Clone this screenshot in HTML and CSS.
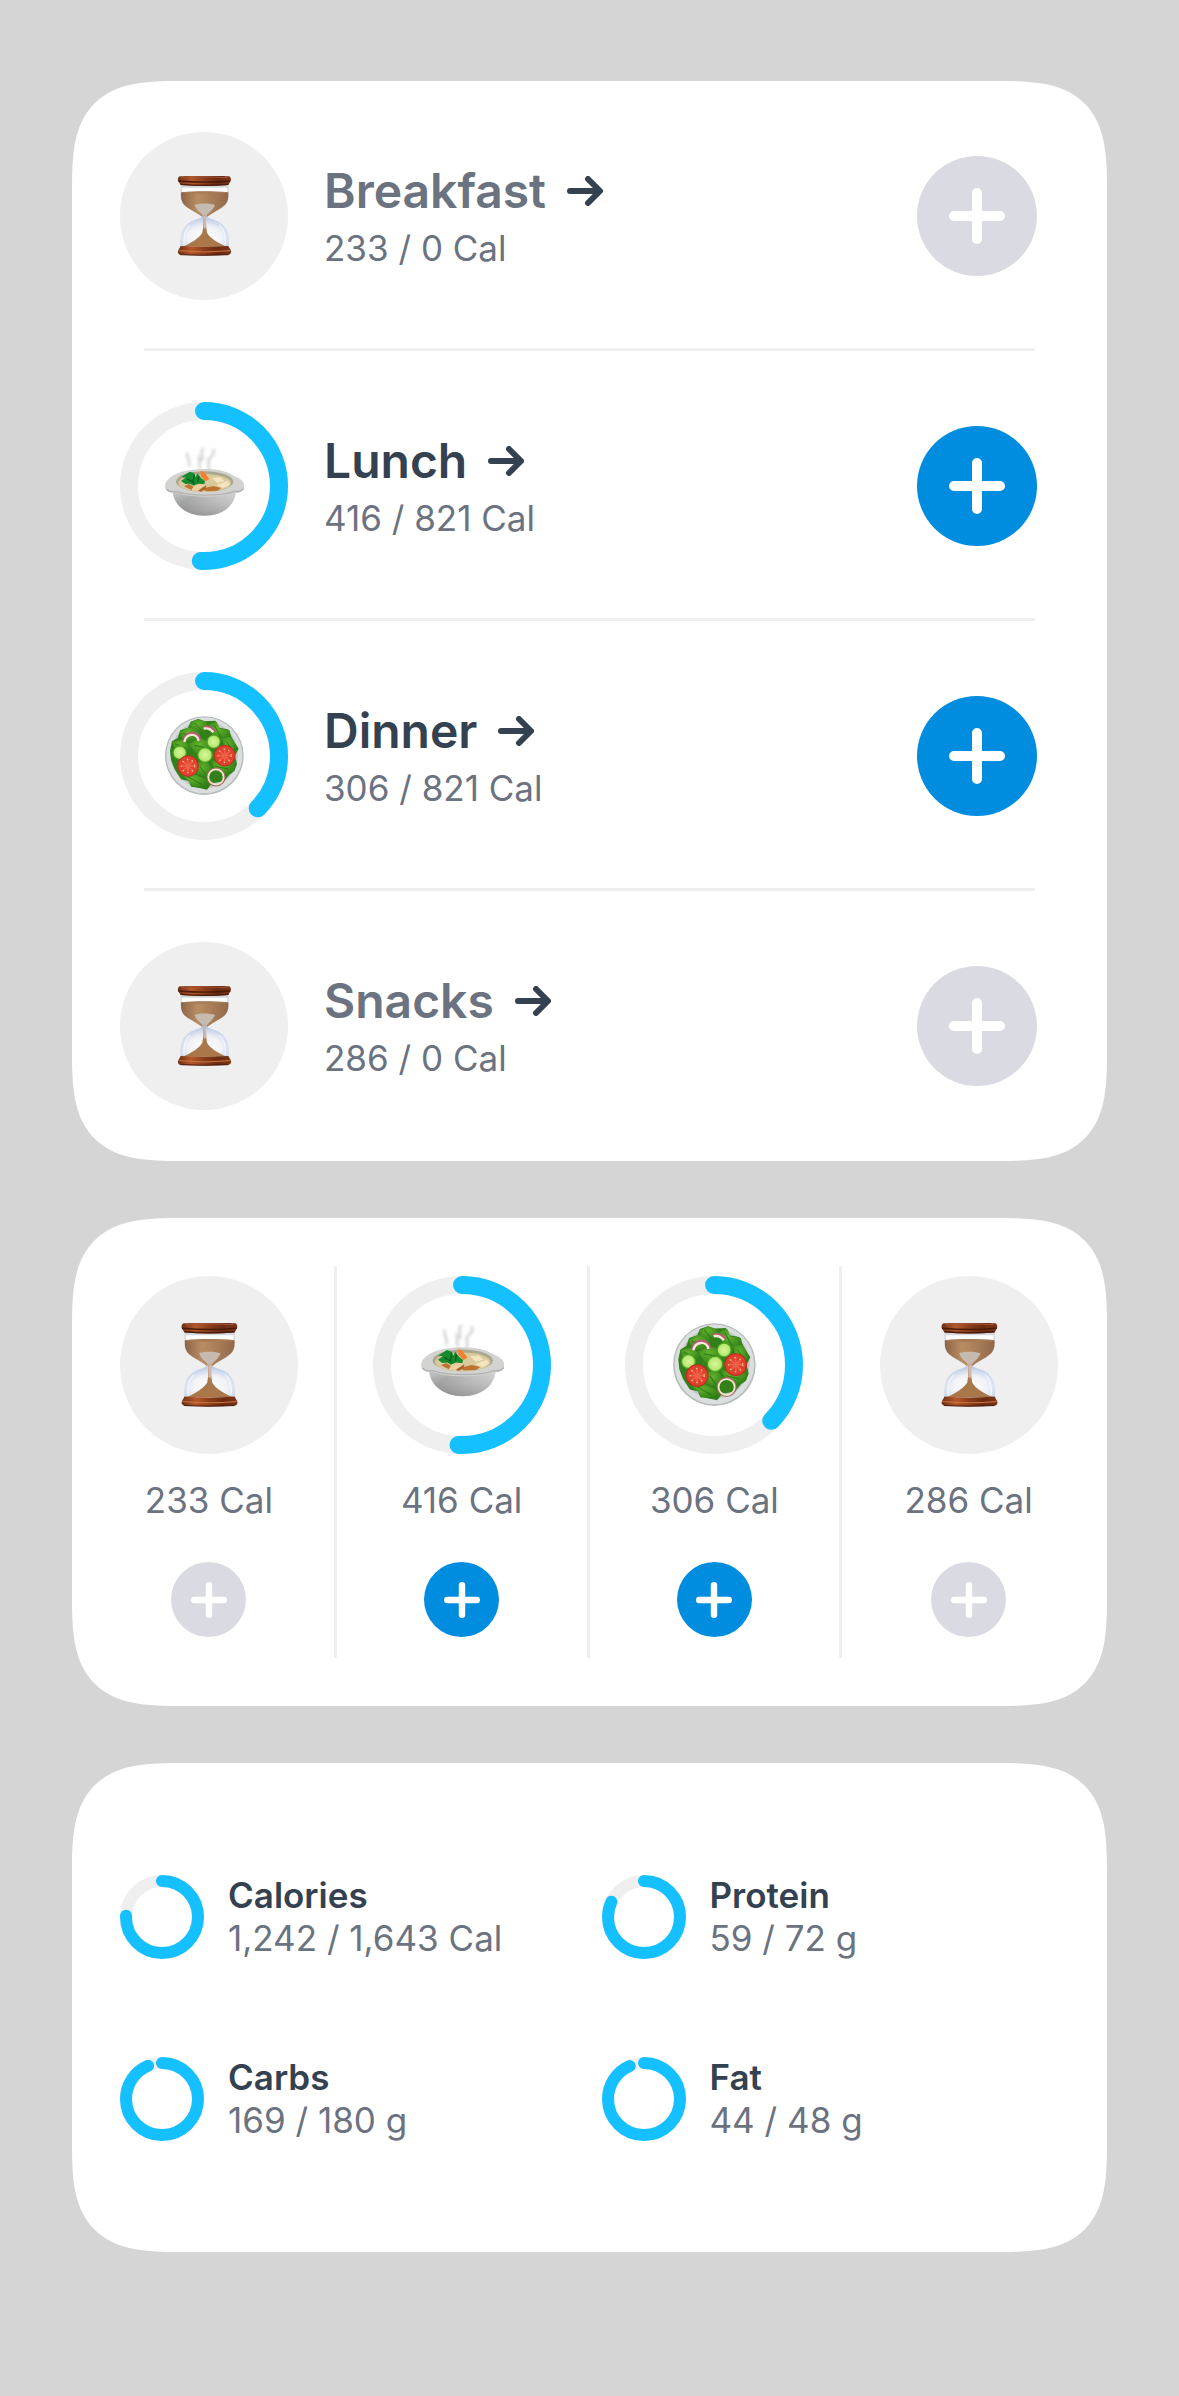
FILE: index.html
```html
<!DOCTYPE html>
<html lang="en">
<head>
<meta charset="utf-8">
<meta name="viewport" content="width=device-width, initial-scale=1">
<title>Meals and nutrition</title>
<link rel="stylesheet" href="styles.css">
</head>
<body>
<svg class="sprite" aria-hidden="true">
  <defs>
    <linearGradient id="wood" x1="0" x2="1" y1="0" y2="0">
      <stop offset="0" stop-color="#6b2f14"/><stop offset=".25" stop-color="#b4582b"/><stop offset=".5" stop-color="#8a3d1b"/><stop offset=".75" stop-color="#6a2a10"/><stop offset="1" stop-color="#7c3518"/>
    </linearGradient>
    <linearGradient id="sand" x1="0" x2="1" y1="0" y2="0">
      <stop offset="0" stop-color="#8d6547"/><stop offset=".35" stop-color="#b98d64"/><stop offset="1" stop-color="#94694a"/>
    </linearGradient>
    <radialGradient id="glass" cx=".5" cy=".7" r=".65">
      <stop offset="0" stop-color="#ffffff"/><stop offset=".55" stop-color="#f0f2f6"/><stop offset="1" stop-color="#b4c6e4"/>
    </radialGradient>
    <linearGradient id="bowl" x1="0" x2="1" y1="0" y2=".5">
      <stop offset="0" stop-color="#b9bab9"/><stop offset=".35" stop-color="#9d9f9e"/><stop offset=".7" stop-color="#bfc0bf"/><stop offset="1" stop-color="#d2d3d2"/>
    </linearGradient>
    <linearGradient id="bowl-shade" x1="0" x2="0" y1="0" y2="1">
      <stop offset="0" stop-color="#fff" stop-opacity=".25"/><stop offset="1" stop-color="#555" stop-opacity=".4"/>
    </linearGradient>
    <radialGradient id="leaf" cx=".4" cy=".35" r=".7">
      <stop offset="0" stop-color="#62b22c"/><stop offset="1" stop-color="#2f7d14"/>
    </radialGradient>
    <radialGradient id="cucumber">
      <stop offset="0" stop-color="#d9f59b"/><stop offset=".75" stop-color="#b9ea74"/><stop offset="1" stop-color="#7fc83e"/>
    </radialGradient>
    <filter id="haze" x="-20%" y="-20%" width="140%" height="140%"><feGaussianBlur stdDeviation="4"/></filter>
  </defs>

  <symbol id="hourglass" viewBox="0 0 240 240">
    <path d="M50 28H194C194 48 195 62 191 76C184 96 160 100 128 124H115C84 100 60 96 53 76C49 62 50 48 50 28Z" fill="#d3d8dd"/>
    <path d="M54 35H190V48H54Z" fill="#fff"/>
    <path d="M51 49C90 47 154 47 193 49C193 60 194 66 190 76C183 95 158 101 128 124H116C86 101 60 95 54 76C50 66 51 60 51 49Z" fill="url(#sand)"/>
    <path d="M52 49C90 45 152 45 192 49C170 55 80 55 52 49Z" fill="#a67b56"/>
    <path d="M92 86C112 81 138 81 153 87C148 101 134 110 127 119H117C110 109 95 101 92 86Z" fill="#c6bbb0"/>
    <path d="M116 118H127C129 127 140 128 158 134C186 146 198 172 194 212H50C46 172 58 146 86 134C104 128 114 127 116 118Z" fill="url(#glass)"/>
    <path d="M118 118H126C126 140 126 155 129 170C139 188 164 201 187 212H57C81 201 106 186 115 170C118 155 118 140 118 118Z" fill="#a9774a"/>
    <path d="M118 118H126V152C124 160 120 160 118 152Z" fill="#d4b7a6"/>
    <path d="M60 206C60 178 62 160 78 148M184 206C184 178 182 160 166 148" fill="none" stroke="#fff" stroke-width="4" opacity=".6"/>
    <path d="M47 1Q122-4 196 1Q203 7 200 14L193 27Q122 33 50 27L42 14Q40 5 47 1Z" fill="url(#wood)"/>
    <path d="M43 15Q122 22 199 15M50 25Q122 31 193 25" fill="none" stroke="#491b0a" stroke-width="4"/>
    <path d="M53 5Q122 0 190 5" fill="none" stroke="#9f5434" stroke-width="3"/>
    <path d="M50 210Q122 215 193 210L201 224Q203 232 195 236Q122 240 47 236Q39 231 43 223Z" fill="url(#wood)"/>
    <path d="M44 224Q122 232 199 224" fill="none" stroke="#d07540" stroke-width="3"/>
    <path d="M49 236Q122 240 193 236" fill="none" stroke="#45180a" stroke-width="3"/>
  </symbol>

  <symbol id="soup" viewBox="0 0 240 240">
    <g fill="none" stroke="#d0d0d2" stroke-width="7" stroke-linecap="round" filter="url(#haze)">
      <path d="M70 22C66 34 80 42 76 60M104 32C112 38 102 50 108 66M117 8C104 22 122 30 114 42M148 12C156 24 138 34 132 44C140 56 130 62 136 72"/>
    </g>
    <path d="M25 130H217C215 178 178 209 122 209C66 209 27 178 25 130Z" fill="url(#bowl)"/>
    <path d="M25 130H217C215 178 178 209 122 209C66 209 27 178 25 130Z" fill="url(#bowl-shade)"/>
    <path d="M28 88C48 76 82 69 122 69C162 69 194 77 212 91C230 98 242 108 241 121C240 137 224 143 210 140C190 149 158 152 122 152C86 152 55 148 34 139C18 143 4 135 3 122C3 107 14 98 28 88Z" fill="#d2d3d0"/>
    <path d="M7 129C16 140 25 137 36 136C78 151 174 151 211 136C224 138 233 135 239 127" fill="none" stroke="#b2b3b1" stroke-width="4"/>
    <ellipse cx="122" cy="107" rx="86" ry="31" fill="#aaa78f"/>
    <ellipse cx="122" cy="111" rx="79" ry="27" fill="#d9c99c"/>
    <path d="M143 96L169 93L182 105L160 111ZM158 117L190 105L199 115L178 127Z" fill="#f3e4be"/>
    <path d="M60 121L75 114L88 122L84 133ZM118 127L148 120L172 126L161 134L124 136Z" fill="#bd7432"/>
    <path d="M91 120L118 113L127 119L106 137L82 132Z" fill="#edcfa0"/>
    <path d="M102 134L127 117L124 130L110 137Z" fill="#aa6428"/>
    <path d="M109 75L119 77L136 99L124 106L110 90Z" fill="#f28030"/>
    <path d="M51 105L65 95L52 93L77 77L91 82L94 94L101 82L111 96L123 106L121 115L103 113L88 119L78 113L64 114Z" fill="#168b2c"/>
    <path d="M69 98L92 112M91 86L87 108M104 91L101 108" stroke="#075f20" stroke-width="4" fill="none"/>
  </symbol>

  <symbol id="salad" viewBox="0 0 240 240">
    <circle cx="121" cy="119" r="118" fill="#b5babb"/>
    <circle cx="121" cy="118" r="114" fill="#dadedf"/>
    <circle cx="121" cy="116" r="101" fill="#c1c8c5"/>
    <path d="M41 66L49 43L72 35L80 17L102 9L123 16L154 14L164 35L192 40L201 60L211 78L224 98L213 119L219 145L211 165L196 176L180 196L144 202L129 221L103 215L81 212L74 195L51 190L32 160L21 132L18 104L24 76Z" fill="#31801a"/>
    <g fill="url(#leaf)">
      <path d="M78 22L103 9L125 18L138 36L112 49L84 44Z"/>
      <path d="M47 48L77 33L110 47L98 74L60 79Z"/>
      <path d="M136 24L158 17L168 39L197 43L202 68L172 78L145 58Z"/>
      <path d="M174 67L200 62L218 93L213 118L184 101Z"/>
      <path d="M23 77L54 71L83 91L65 111L31 94Z"/>
      <path d="M75 83L106 67L150 79L139 109L99 119Z"/>
      <path d="M140 133L178 144L216 133L212 163L187 176L153 161Z"/>
      <path d="M50 175L91 174L125 191L134 213L108 216L82 209L75 194Z"/>
      <path d="M97 139L130 137L146 158L126 184L96 173Z"/>
    </g>
    <g fill="none" stroke="#1d6512" stroke-width="3" opacity=".7">
      <path d="M92 20L112 43M57 53L88 60M151 28L171 65M187 76L207 105M33 83L67 99M91 88L130 96M70 181L112 205M108 151L124 174M154 151L193 159"/>
    </g>
    <g fill="none">
      <path d="M60 77C63 46 103 44 107 73M118 36C128 31 145 35 150 48" stroke="#b65d70" stroke-width="11"/>
      <path d="M61 78C66 51 99 50 104 74M119 38C130 35 140 39 148 49" stroke="#f7e8db" stroke-width="7"/>
      <circle cx="156" cy="183" r="25" stroke="#a86561" stroke-width="7"/>
      <circle cx="156" cy="183" r="23" stroke="#f3e7cd" stroke-width="5"/>
    </g>
    <g fill="url(#cucumber)" stroke="#4a9f24" stroke-width="3">
      <circle cx="47" cy="110" r="20"/><circle cx="149" cy="77" r="20"/><circle cx="123" cy="117" r="22"/>
    </g>
    <g fill="#df4030" stroke="#bd2d20" stroke-width="3">
      <circle cx="72" cy="150" r="31"/><circle cx="182" cy="119" r="31"/>
    </g>
    <g fill="none" stroke="#ee6149" stroke-width="5">
      <path d="M72 129V171M51 150H93M57 136L87 165M87 136L57 165M182 98V140M161 119H203M167 105L197 134M197 105L167 134"/>
    </g>
    <g fill="none" stroke="#f5c179" stroke-width="4" stroke-dasharray="4 11">
      <circle cx="72" cy="150" r="20"/><circle cx="182" cy="119" r="20"/>
    </g>
  </symbol>

  <symbol id="arrow" viewBox="0 0 36 30">
    <path d="M3 15H32M21 3L33 15L21 27" fill="none" stroke="currentColor" stroke-width="6" stroke-linecap="round" stroke-linejoin="round"/>
  </symbol>
  <symbol id="plus" viewBox="0 0 56 56">
    <path d="M28 5V51M5 28H51" fill="none" stroke="currentColor" stroke-width="10" stroke-linecap="round"/>
  </symbol>
</svg>

<main class="page">
  <section class="card meals" aria-label="Meals">
    <article class="meal">
      <div class="dial dial-off"><svg class="food"><use href="#hourglass"/></svg></div>
      <div class="meal-text">
        <a class="meal-name muted" href="#breakfast">Breakfast<svg class="arrow"><use href="#arrow"/></svg></a>
        <p class="amount">233 / 0 Cal</p>
      </div>
      <button class="add" disabled aria-label="Add breakfast"><svg class="plus"><use href="#plus"/></svg></button>
    </article>
    <hr class="rule">
    <article class="meal">
      <div class="dial">
        <svg class="ring" viewBox="0 0 168 168"><circle class="track" cx="84" cy="84" r="75"/><circle class="value" cx="84" cy="84" r="75" pathLength="1000" stroke-dasharray="507 1000"/></svg>
        <svg class="food"><use href="#soup"/></svg>
      </div>
      <div class="meal-text">
        <a class="meal-name" href="#lunch">Lunch<svg class="arrow"><use href="#arrow"/></svg></a>
        <p class="amount">416 / 821 Cal</p>
      </div>
      <button class="add" aria-label="Add lunch"><svg class="plus"><use href="#plus"/></svg></button>
    </article>
    <hr class="rule">
    <article class="meal">
      <div class="dial">
        <svg class="ring" viewBox="0 0 168 168"><circle class="track" cx="84" cy="84" r="75"/><circle class="value" cx="84" cy="84" r="75" pathLength="1000" stroke-dasharray="373 1000"/></svg>
        <svg class="food"><use href="#salad"/></svg>
      </div>
      <div class="meal-text">
        <a class="meal-name" href="#dinner">Dinner<svg class="arrow"><use href="#arrow"/></svg></a>
        <p class="amount">306 / 821 Cal</p>
      </div>
      <button class="add" aria-label="Add dinner"><svg class="plus"><use href="#plus"/></svg></button>
    </article>
    <hr class="rule">
    <article class="meal">
      <div class="dial dial-off"><svg class="food"><use href="#hourglass"/></svg></div>
      <div class="meal-text">
        <a class="meal-name muted" href="#snacks">Snacks<svg class="arrow"><use href="#arrow"/></svg></a>
        <p class="amount">286 / 0 Cal</p>
      </div>
      <button class="add" disabled aria-label="Add snacks"><svg class="plus"><use href="#plus"/></svg></button>
    </article>
  </section>

  <section class="card summary" aria-label="Meal summary">
    <article class="column">
      <div class="dial dial-off"><svg class="food"><use href="#hourglass"/></svg></div>
      <p class="amount">233 Cal</p>
      <button class="add" disabled aria-label="Add breakfast"><svg class="plus"><use href="#plus"/></svg></button>
    </article>
    <article class="column">
      <div class="dial">
        <svg class="ring" viewBox="0 0 178 178"><circle class="track" cx="89" cy="89" r="80"/><circle class="value" cx="89" cy="89" r="80" pathLength="1000" stroke-dasharray="507 1000"/></svg>
        <svg class="food"><use href="#soup"/></svg>
      </div>
      <p class="amount">416 Cal</p>
      <button class="add" aria-label="Add lunch"><svg class="plus"><use href="#plus"/></svg></button>
    </article>
    <article class="column">
      <div class="dial">
        <svg class="ring" viewBox="0 0 178 178"><circle class="track" cx="89" cy="89" r="80"/><circle class="value" cx="89" cy="89" r="80" pathLength="1000" stroke-dasharray="373 1000"/></svg>
        <svg class="food"><use href="#salad"/></svg>
      </div>
      <p class="amount">306 Cal</p>
      <button class="add" aria-label="Add dinner"><svg class="plus"><use href="#plus"/></svg></button>
    </article>
    <article class="column">
      <div class="dial dial-off"><svg class="food"><use href="#hourglass"/></svg></div>
      <p class="amount">286 Cal</p>
      <button class="add" disabled aria-label="Add snacks"><svg class="plus"><use href="#plus"/></svg></button>
    </article>
  </section>

  <section class="card nutrients" aria-label="Nutrients">
    <article class="nutrient">
      <svg class="ring" viewBox="0 0 84 84"><circle class="track" cx="42" cy="42" r="36"/><circle class="value" cx="42" cy="42" r="36" pathLength="1000" stroke-dasharray="756 1000"/></svg>
      <div><h2 class="nutrient-name">Calories</h2><p class="amount">1,242 / 1,643 Cal</p></div>
    </article>
    <article class="nutrient">
      <svg class="ring" viewBox="0 0 84 84"><circle class="track" cx="42" cy="42" r="36"/><circle class="value" cx="42" cy="42" r="36" pathLength="1000" stroke-dasharray="820 1000"/></svg>
      <div><h2 class="nutrient-name">Protein</h2><p class="amount">59 / 72 g</p></div>
    </article>
    <article class="nutrient">
      <svg class="ring" viewBox="0 0 84 84"><circle class="track" cx="42" cy="42" r="36"/><circle class="value" cx="42" cy="42" r="36" pathLength="1000" stroke-dasharray="937 1000"/></svg>
      <div><h2 class="nutrient-name">Carbs</h2><p class="amount">169 / 180 g</p></div>
    </article>
    <article class="nutrient">
      <svg class="ring" viewBox="0 0 84 84"><circle class="track" cx="42" cy="42" r="36"/><circle class="value" cx="42" cy="42" r="36" pathLength="1000" stroke-dasharray="935 1000"/></svg>
      <div><h2 class="nutrient-name">Fat</h2><p class="amount">44 / 48 g</p></div>
    </article>
  </section>
</main>
</body>
</html>
```
FILE: styles.css
```css
* { box-sizing: border-box; }

body {
  margin: 0;
  background: #d5d5d5;
  color: #344150;
  font-family: Inter, Roboto, sans-serif;
  font-size: 35px;
  line-height: 43px;
}

h2, p { margin: 0; }

svg { display: block; }

.sprite { position: absolute; width: 0; height: 0; }

.page {
  display: flex;
  flex-direction: column;
  gap: 57px;
  padding: 81px 72px;
}

.card {
  background: #fff;
  border-radius: 84px;
}

@supports (corner-shape: superellipse(1.6)) {
  .card {
    border-radius: 110px;
    corner-shape: superellipse(1.6);
  }
}

.amount { color: #6b7280; }

/* Progress dials */
.dial {
  display: grid;
  flex: none;
  place-items: center;
  width: 168px;
  height: 168px;
  border-radius: 50%;
}

.dial > * { grid-area: 1 / 1; }

.dial-off { background: #efefef; }

.ring {
  width: 100%;
  height: 100%;
  fill: none;
  stroke-width: 18px;
  transform: rotate(-90deg);
}

.track { stroke: #efefef; }

.value { stroke: #14c0ff; stroke-linecap: round; }

.food { width: 80px; height: 80px; overflow: visible; }

/* Round add buttons */
.add {
  display: grid;
  flex: none;
  place-items: center;
  width: 120px;
  height: 120px;
  padding: 0;
  border: 0;
  border-radius: 50%;
  background: #008ddf;
  color: #fff;
}

.add:disabled { background: #dadbe2; }

.plus { width: 56px; height: 56px; }

/* Meal list */
.meals { padding: 51px 0; }

.meal {
  display: flex;
  align-items: center;
  gap: 36px;
  padding: 0 70px 0 48px;
}

.meal-text {
  display: flex;
  flex: 1;
  flex-direction: column;
  gap: 8px;
}

.meal-name {
  display: flex;
  align-items: center;
  gap: 21px;
  color: inherit;
  font-size: 48px;
  font-weight: 600;
  line-height: 56px;
  text-decoration: none;
}

.muted { color: #6b7280; }

.arrow { width: 36px; height: 30px; color: #344150; }

.rule {
  height: 3px;
  margin: 48px 72px 51px;
  border: 0;
  background: #efefef;
}

/* Meal summary */
.summary {
  display: grid;
  grid-template-columns: repeat(4, 1fr);
  padding: 48px 12px;
}

.column {
  display: flex;
  flex-direction: column;
  align-items: center;
  padding: 10px 0 21px;
}

.column:not(:last-child) { border-right: 3px solid #efefef; }

.summary .dial { width: 178px; height: 178px; }

.summary .food { width: 84px; height: 84px; }

.summary .amount { margin: 25px 0 40px; }

.summary .add { width: 75px; height: 75px; }

.summary .plus { width: 36px; height: 36px; }

/* Nutrient totals */
.nutrients {
  display: grid;
  grid-template-columns: repeat(2, 1fr);
  gap: 96px 24px;
  padding: 111px 48px 110px;
}

.nutrient {
  display: flex;
  align-items: center;
  gap: 24px;
}

.nutrient .ring { flex: none; width: 84px; height: 84px; stroke-width: 12px; }

.nutrient-name { font-size: 35px; font-weight: 600; line-height: 43px; }
```
